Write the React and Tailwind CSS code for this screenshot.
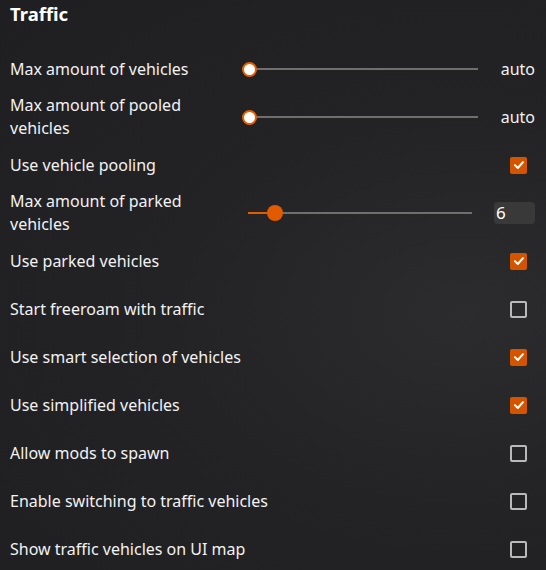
import React from 'react';

const Check = ({ on }) =>
  on ? (
    <div className="w-[17px] h-[17px] rounded-[2px] bg-[#d45500] flex items-center justify-center">
      <svg width="12" height="12" viewBox="0 0 12 12" fill="none">
        <path d="M2 6.3 L4.8 9 L10 3.2" stroke="#fff" strokeWidth="2" strokeLinecap="round" strokeLinejoin="round" />
      </svg>
    </div>
  ) : (
    <div className="w-[17px] h-[17px] rounded-[2px] border-2 border-[#b9b9b9]"></div>
  );

const CheckRow = ({ label, on }) => (
  <div className="flex items-center h-12">
    <span className="flex-1">{label}</span>
    <div className="mr-[8px]">
      <Check on={on} />
    </div>
  </div>
);

const AutoSlider = ({ label }) => (
  <div className="flex items-center h-12">
    <span className="w-[232px] leading-[23px]">{label}</span>
    <div className="relative w-[236px] h-4 flex items-center">
      <div className="w-full h-[2px] bg-[#6f6f6f]"></div>
      <div className="absolute left-0 top-[0.5px] w-[15px] h-[15px] rounded-full bg-white border-2 border-[#e35f00]"></div>
    </div>
    <span className="ml-auto">auto</span>
  </div>
);

const App = () => {
  return (
    <div
      className="w-[546px] h-[570px] overflow-hidden text-[#f2f2f2] text-[16px] pl-[10px] pr-[11px] bg-[#232326]"
      style={{ fontFamily: '"Noto Sans", "Open Sans", sans-serif', backgroundImage: 'radial-gradient(ellipse at 85% 55%, #2c2c2e 0%, #232326 45%, #1f1f22 100%)' }}
    >
      <div className="h-[45px] pt-[3px]">
        <h1 className="text-[18.5px] font-bold leading-[22px] text-white">Traffic</h1>
      </div>

      <AutoSlider label="Max amount of vehicles" />
      <AutoSlider label="Max amount of pooled vehicles" />
      <CheckRow label="Use vehicle pooling" on />

      <div className="flex items-center h-12">
        <span className="w-[232px] leading-[23px]">Max amount of parked vehicles</span>
        <div className="relative ml-[6px] w-[224px] h-4 flex items-center">
          <div className="w-[27px] h-[2px] bg-[#e35b00]"></div>
          <div className="flex-1 h-[2px] bg-[#6f6f6f]"></div>
          <div className="absolute left-[19px] top-0 w-4 h-4 rounded-full bg-[#e35b00]"></div>
        </div>
        <div className="ml-auto w-[41px] h-[22px] rounded-[4px] bg-[#393939] pl-[2px] text-[17px] leading-[22px] text-white">6</div>
      </div>

      <CheckRow label="Use parked vehicles" on />
      <CheckRow label="Start freeroam with traffic" />
      <CheckRow label="Use smart selection of vehicles" on />
      <CheckRow label="Use simplified vehicles" on />
      <CheckRow label="Allow mods to spawn" />
      <CheckRow label="Enable switching to traffic vehicles" />
      <CheckRow label="Show traffic vehicles on UI map" />
    </div>
  );
};

export default App;
